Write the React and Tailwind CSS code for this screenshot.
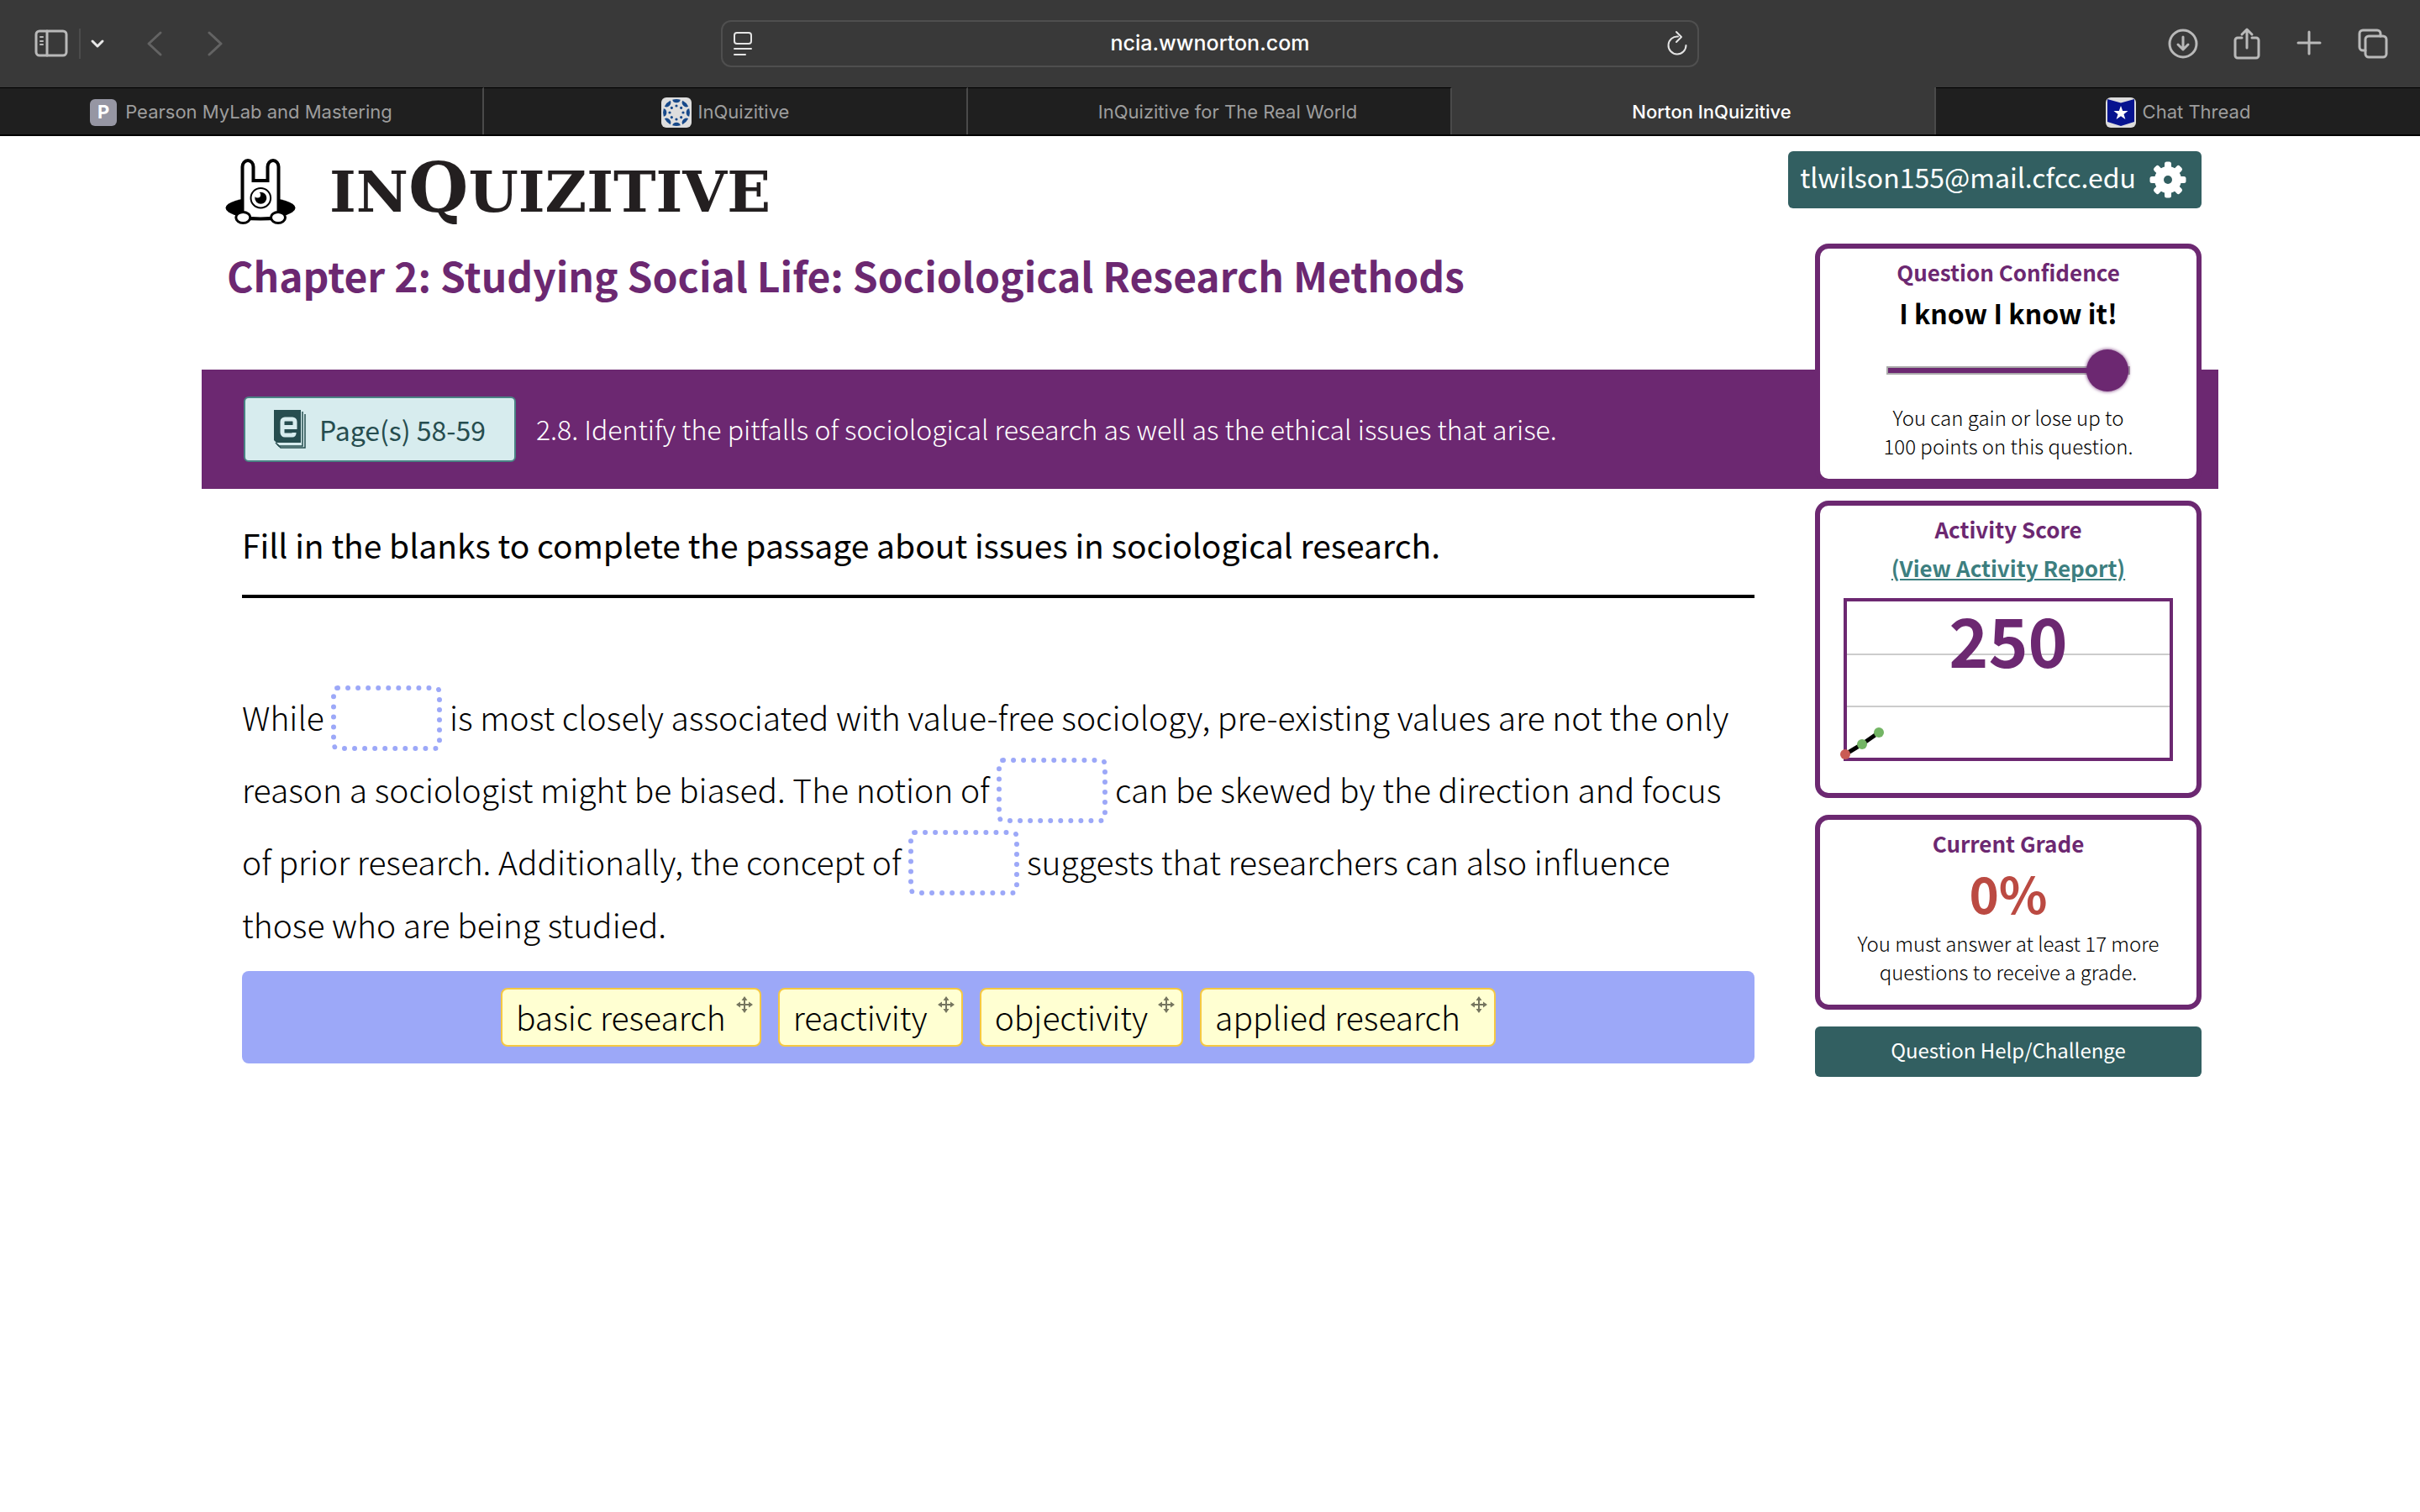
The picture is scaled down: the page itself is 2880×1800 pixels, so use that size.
import React from 'react';
import clsx from 'clsx';

const TABS = [
  { title: 'Pearson MyLab and Mastering', icon: 'pearson' },
  { title: 'InQuizitive', icon: 'canvas' },
  { title: 'InQuizitive for The Real World' },
  { title: 'Norton InQuizitive', active: true },
  { title: 'Chat Thread', icon: 'star' },
];

const ANSWERS = ['basic research', 'reactivity', 'objectivity', 'applied research'];

const SPOKES = [0, 45, 90, 135, 180, 225, 270, 315];

const Stroke = ({ className, viewBox, width = 2, children }) => (
  <svg
    className={className}
    viewBox={viewBox}
    fill="none"
    stroke="currentColor"
    strokeWidth={width}
    strokeLinecap="round"
    strokeLinejoin="round"
    aria-hidden="true"
  >
    {children}
  </svg>
);

const TabIcon = ({ name }) => {
  if (name === 'pearson') {
    return (
      <span className="mr-0.5 flex h-8 w-8 items-center justify-center rounded-md bg-[#9696a3] text-[22px] font-bold text-white">
        P
      </span>
    );
  }
  if (name === 'canvas') {
    return (
      <svg className="h-9 w-9" viewBox="0 0 36 36" aria-hidden="true">
        <rect width="36" height="36" rx="6" fill="#dedede" />
        {SPOKES.map((angle) => (
          <g key={angle} transform={`rotate(${angle} 18 18)`} fill="#17498a">
            <path d="M13.2 2.8a16 16 0 0 1 9.6 0a4.9 4.4 0 0 1 -9.6 0z" />
            <circle cx="18" cy="10" r="1.6" />
          </g>
        ))}
      </svg>
    );
  }
  if (name === 'star') {
    return (
      <svg className="h-9 w-9" viewBox="0 0 36 36" aria-hidden="true">
        <rect width="36" height="36" rx="6" fill="#dcdcdc" />
        <path d="M2 2l16 4.500l16-4.500v27l-16 5l-16-5z" fill="#06138f" />
        <path
          d="M18 10l2.200 6h6.300l-5 3.900l1.900 6.100l-5.400-3.700l-5.400 3.700l1.900-6.100l-5-3.900h6.300z"
          fill="#fff"
        />
      </svg>
    );
  }
  // tabs without a favicon keep its space
  return <span className="h-9 w-9" />;
};

const Toolbar = () => (
  <div className="flex h-[104px] items-center justify-between bg-[#393939] px-9 text-[#b9b9b9]">
    <div className="flex flex-1 items-center">
      <button aria-label="Sidebar">
        <Stroke className="h-10 w-12" viewBox="0 0 48 40" width={3}>
          <rect x="7" y="5" width="36" height="29" rx="4" />
          <path d="M20 5v29" />
          <path d="M12 12h3M12 17h3M12 21h3" strokeWidth="2" />
        </Stroke>
      </button>
      <span className="ml-2.5 h-9 w-0.5 bg-[#4c4c4c]" />
      <button aria-label="Tab groups" className="ml-2.5 text-[#e8e8e8]">
        <Stroke className="h-4 w-5" viewBox="0 0 20 16" width={3}>
          <path d="M4 5l6 6l6-6" />
        </Stroke>
      </button>
      <button aria-label="Back" className="ml-12 text-[#636363]">
        <Stroke className="h-8 w-5" viewBox="0 0 20 32" width={3}>
          <path d="M17 3l-14 13l14 13" />
        </Stroke>
      </button>
      <button aria-label="Forward" className="ml-[52px] text-[#636363]">
        <Stroke className="h-8 w-5" viewBox="0 0 20 32" width={3}>
          <path d="M3 3l14 13l-14 13" />
        </Stroke>
      </button>
    </div>

    <div className="flex h-14 w-[1164px] items-center justify-between rounded-xl border-2 border-[#4f4f4f] px-[10px] text-[#e4e4e4]">
      <button aria-label="Reader">
        <Stroke className="h-8 w-7" viewBox="0 0 28 32" width={2}>
          <rect x="4" y="3" width="20" height="13" rx="3" />
          <path d="M4 22h20M4 29h13" />
        </Stroke>
      </button>
      <input
        aria-label="Address"
        readOnly
        value="ncia.wwnorton.com"
        className="min-w-0 flex-1 bg-transparent text-center text-[25px] font-medium text-white outline-none"
      />
      <button aria-label="Reload">
        <Stroke className="h-8 w-7" viewBox="0 0 28 32" width={2}>
          <path d="M15 7.500a10.500 10.500 0 1 0 9.500 10.500" />
          <path d="M13 2l6 6l-6 6" />
        </Stroke>
      </button>
    </div>

    <div className="flex flex-1 items-center justify-end gap-[38px]">
      <button aria-label="Downloads">
        <Stroke className="h-10 w-10" viewBox="0 0 40 40" width={3}>
          <circle cx="20" cy="20" r="16" />
          <path d="M20 12v15M14 21l6 6l6-6" />
        </Stroke>
      </button>
      <button aria-label="Share">
        <Stroke className="h-10 w-9" viewBox="0 0 36 40" width={3}>
          <path d="M12 13h-5a3 3 0 0 0 -3 3v18a3 3 0 0 0 3 3h22a3 3 0 0 0 3-3v-18a3 3 0 0 0 -3-3h-5" />
          <path d="M18 25v-22M12 9l6-6l6 6" />
        </Stroke>
      </button>
      <button aria-label="New tab">
        <Stroke className="h-10 w-9" viewBox="0 0 36 40" width={3}>
          <path d="M18 6v26M5 19h26" />
        </Stroke>
      </button>
      <button aria-label="Tab overview">
        <Stroke className="h-10 w-10" viewBox="0 0 40 40" width={3}>
          <rect x="11" y="11" width="25" height="25" rx="4" />
          <path d="M11 28h-3a4 4 0 0 1 -4-4v-16a4 4 0 0 1 4-4h17a4 4 0 0 1 4 4v3" />
        </Stroke>
      </button>
    </div>
  </div>
);

const TabBar = () => (
  <nav className="grid h-[58px] grid-cols-5 border-b-2 border-black bg-[#1f1f1f] text-[22px]">
    {TABS.map((tab) => (
      <button
        key={tab.title}
        className={clsx(
          'flex items-center justify-center gap-2 border-r-2 border-r-[#4a4a4a] pt-0.5 last:border-r-0',
          tab.active
            ? 'bg-[#393939] font-medium text-white'
            : 'border-t border-t-black text-[#9d9d9d]'
        )}
      >
        <TabIcon name={tab.icon} />
        {tab.title}
      </button>
    ))}
  </nav>
);

const Bunny = () => (
  <svg className="h-[78px] w-[84px]" viewBox="0 0 84 78" aria-hidden="true">
    <ellipse cx="42" cy="58.500" rx="41.500" ry="12.500" fill="#000" />
    <path
      d="M20.500 70V9.500a6.500 7.500 0 0 1 13 0V26h17V9.500a6.500 7.500 0 0 1 13 0V70q-21.500 3 -43 0z"
      fill="#fff"
      stroke="#000"
      strokeWidth="4"
    />
    <circle cx="42.300" cy="46.700" r="11.800" fill="#fff" stroke="#000" strokeWidth="2" />
    <circle cx="42.300" cy="46.700" r="7" fill="#000" />
    <circle cx="38.500" cy="43" r="3.600" fill="#fff" />
    <ellipse cx="21.300" cy="70" rx="8.500" ry="6.500" fill="#fff" stroke="#000" strokeWidth="3" />
    <ellipse cx="63" cy="70" rx="8.500" ry="6.500" fill="#fff" stroke="#000" strokeWidth="3" />
  </svg>
);

const Gear = () => (
  <svg className="h-11 w-11" viewBox="0 0 44 44" aria-hidden="true">
    <g fill="#fff">
      {SPOKES.map((angle) => (
        <rect
          key={angle}
          x="18"
          y="0.500"
          width="8"
          height="12"
          rx="2.500"
          transform={`rotate(${angle} 22 22)`}
        />
      ))}
      <circle cx="22" cy="22" r="16" />
    </g>
    <circle cx="22" cy="22" r="5" fill="#325f61" />
  </svg>
);

const EbookIcon = () => (
  <svg className="h-[46px] w-[38px]" viewBox="0 0 38 46" aria-hidden="true">
    <path d="M4 41l4 4h29V5" fill="none" stroke="#264d4f" strokeWidth="1.500" />
    <path d="M2 39l4 4h28V2" fill="none" stroke="#264d4f" strokeWidth="1.500" />
    <path d="M0 0h32v39H3l-3-3z" fill="#264d4f" />
    <path
      d="M24 27v1a2 2 0 0 1 -2 2h-9a3 3 0 0 1 -3-3v-13a3 3 0 0 1 3-3h9a3 3 0 0 1 3 3v6.500h-15"
      fill="none"
      stroke="#d7ecee"
      strokeWidth="5"
    />
  </svg>
);

const MoveIcon = () => (
  <svg className="mt-2 h-5 w-5" viewBox="0 0 20 20" fill="#75755f" aria-hidden="true">
    <path d="M9 2h2v16h-2zM2 9h16v2h-16z" />
    <path d="M10 0l3.500 5h-7zM10 20l3.500-5h-7zM0 10l5-3.500v7zM20 10l-5-3.500v7z" />
  </svg>
);

const Card = ({ title, className, children }) => (
  <section
    className={clsx(
      'flex flex-col items-center rounded-2xl border-[6px] border-[#6c2871] bg-white pt-[10px] text-center',
      className
    )}
  >
    <h2 className="text-[26px] leading-9 font-bold text-[#6c2871]">{title}</h2>
    {children}
  </section>
);

const ScoreChart = () => (
  <div className="relative mt-[18px] h-[194px] w-[392px]">
    <svg className="h-full w-full overflow-visible" viewBox="0 0 392 194" aria-hidden="true">
      <path d="M4 67h384M4 129h384" stroke="#ccc" strokeWidth="2" />
      <rect x="2" y="2" width="388" height="190" fill="none" stroke="#6c2871" strokeWidth="4" />
      <path d="M2 186l20-12l20-14" fill="none" stroke="#000" strokeWidth="5" />
      <circle cx="2" cy="186" r="6" fill="#c95b54" />
      <circle cx="22" cy="174" r="6" fill="#73b564" />
      <circle cx="42" cy="160" r="6" fill="#73b564" />
    </svg>
    <strong className="absolute inset-x-0 top-2 text-[80px] leading-[80px] font-bold text-[#6c2871]">
      250
    </strong>
  </div>
);

const Sidebar = () => (
  <aside className="z-10 col-start-2 row-span-3 row-start-1 mr-5 flex flex-col gap-5">
    <Card title="Question Confidence" className="pb-[22px]">
      <label htmlFor="confidence" className="mt-[10px] text-[32px] leading-10 font-bold">
        I know I know it!
      </label>
      <input
        id="confidence"
        type="range"
        defaultValue="100"
        className="mt-11 h-[10px] w-[290px] appearance-none border-2 border-[#aaa] bg-[#6c2871] [&::-webkit-slider-thumb]:h-[50px] [&::-webkit-slider-thumb]:w-[50px] [&::-webkit-slider-thumb]:appearance-none [&::-webkit-slider-thumb]:rounded-full [&::-webkit-slider-thumb]:bg-[#6c2871] [&::-webkit-slider-thumb]:shadow-[0_0_4px_#6c2871]"
      />
      <p className="mt-[34px] text-[24px] leading-[34px] font-light">
        You can gain or lose up to
        <br />
        100 points on this question.
      </p>
    </Card>

    <Card title="Activity Score" className="pb-[38px]">
      <a
        href="#report"
        className="mt-[10px] text-[26px] leading-9 font-bold text-[#3d7f80] underline decoration-2 underline-offset-2"
      >
        (View Activity Report)
      </a>
      <ScoreChart />
    </Card>

    <Card title="Current Grade" className="pb-[22px]">
      <strong className="mt-2 text-[60px] leading-[64px] font-bold text-[#bb4a42]">0%</strong>
      <p className="mt-3 text-[24px] leading-[34px] font-light">
        You must answer at least 17 more
        <br />
        questions to receive a grade.
      </p>
    </Card>

    <button className="h-[60px] rounded-md bg-[#325f61] pb-1 text-[24px] text-white">
      Question Help/Challenge
    </button>
  </aside>
);

const Blank = () => (
  <span className="my-1 inline-block h-[78px] w-[132px] rounded-lg border-[6px] border-dotted border-[#9ca8f8] align-[-28px]" />
);

const Question = () => (
  <main className="col-start-1 row-start-3 mr-[72px] ml-12 pt-9">
    <h2 className="border-b-4 border-black pb-[30px] text-[39px] leading-[60px]">
      Fill in the blanks to complete the passage about issues in sociological research.
    </h2>
    <p className="mt-[100px] text-[39px] leading-[60px] font-light">
      While <Blank /> is most closely associated with value-free sociology, pre-existing values are
      not the only reason a sociologist might be biased. The notion of <Blank /> can be skewed by
      the direction and focus of prior research. Additionally, the concept of <Blank /> suggests
      that researchers can also influence those who are being studied.
    </p>
    <div className="mt-[26px] flex justify-center gap-5 rounded-lg bg-[#9ca8f8] py-5">
      {ANSWERS.map((answer) => (
        <button
          key={answer}
          className="flex h-[70px] gap-3 rounded-lg border-2 border-[#f5c842] bg-[#ffffd2] pr-2 pl-4 text-[39px] leading-[64px] font-light"
        >
          {answer}
          <MoveIcon />
        </button>
      ))}
    </div>
  </main>
);

const App = () => {
  return (
    <div className="min-h-screen bg-white font-['Noto_Sans_CJK_SC','Noto_Sans',sans-serif] text-black">
      <header className="font-[Inter,sans-serif]">
        <Toolbar />
        <TabBar />
      </header>

      <div className="mx-auto w-5/6">
        <div className="flex h-32 items-start justify-between pr-5 pl-7">
          <div className="mt-[27px] flex items-start gap-10">
            <Bunny />
            <span className="font-['DejaVu_Serif',serif] text-[68px] leading-[78px] font-bold text-[#231f20]">
              IN<span className="text-[82px] leading-10">Q</span>UIZITIVE
            </span>
          </div>
          <button className="mt-[18px] flex h-[68px] items-center gap-4 rounded-md bg-[#325f61] pr-[18px] pl-[14px] text-[32px] text-white">
            <span className="pb-2">tlwilson155@mail.cfcc.edu</span>
            <Gear />
          </button>
        </div>

        <div className="grid grid-cols-[1fr_480px] grid-rows-[150px_auto_1fr]">
          <h1 className="col-start-1 row-start-1 pt-[7px] pl-[30px] text-[48px] leading-[60px] font-bold text-[#6c2871]">
            Chapter 2: Studying Social Life: Sociological Research Methods
          </h1>
          <div className="col-span-2 col-start-1 row-start-2 flex h-[142px] items-center gap-6 bg-[#6c2871] pl-[50px]">
            <button className="flex h-[78px] items-center gap-4 rounded-md border-2 border-[#4a8284] bg-[#d7ecee] px-[34px] text-[32px] text-[#264d4f]">
              <EbookIcon />
              Page(s) 58-59
            </button>
            <p className="pb-0.5 text-[32px] font-light text-white">
              2.8. Identify the pitfalls of sociological research as well as the ethical issues that
              arise.
            </p>
          </div>
          <Question />
          <Sidebar />
        </div>
      </div>
    </div>
  );
};

export default App;
